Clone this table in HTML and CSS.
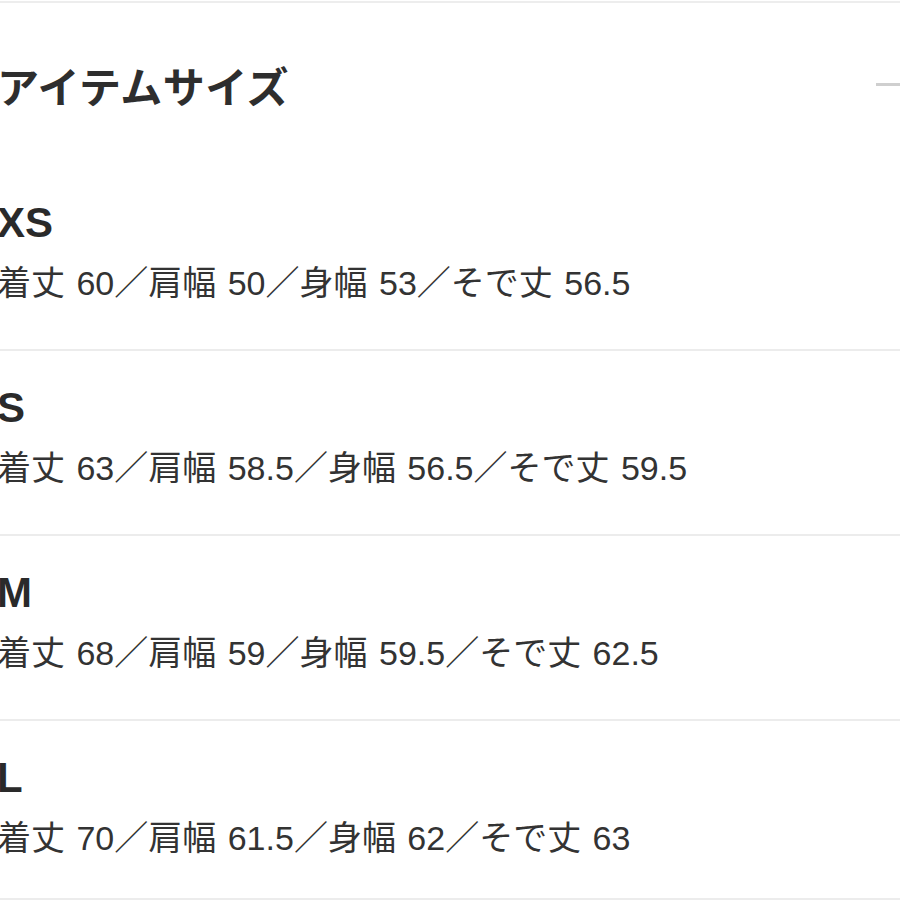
FILE: index.html
```html
<!DOCTYPE html>
<html lang="ja">
<head>
<meta charset="utf-8">
<link rel="stylesheet" href="styles.css">
</head>
<body>
<section class="panel">
  <header class="panel-head">
    <h2 class="panel-title">アイテムサイズ</h2>
    <span class="toggle" aria-label="閉じる"></span>
  </header>
  <ul class="size-list">
    <li class="size-row">
      <div class="size-name">XS</div>
      <div class="size-detail">着丈 60／肩幅 50／身幅 53／そで丈 56.5</div>
    </li>
    <li class="size-row">
      <div class="size-name">S</div>
      <div class="size-detail">着丈 63／肩幅 58.5／身幅 56.5／そで丈 59.5</div>
    </li>
    <li class="size-row">
      <div class="size-name">M</div>
      <div class="size-detail">着丈 68／肩幅 59／身幅 59.5／そで丈 62.5</div>
    </li>
    <li class="size-row">
      <div class="size-name">L</div>
      <div class="size-detail">着丈 70／肩幅 61.5／身幅 62／そで丈 63</div>
    </li>
  </ul>
</section>
</body>
</html>
```

FILE: styles.css
```css
html, body {
  margin: 0;
  padding: 0;
  background: #ffffff;
}

body {
  font-family: "Liberation Sans", "Noto Sans CJK JP", sans-serif;
  color: #333333;
  overflow: hidden;
}

.panel {
  margin-top: 1px;
  border-top: 2px solid #ededed;
  margin-left: -3px;
}

.panel-head {
  display: flex;
  align-items: center;
  justify-content: space-between;
  height: 163px;
  box-sizing: border-box;
}

.panel-title {
  margin: 0;
  font-family: "Noto Sans CJK JP", sans-serif;
  font-size: 42px;
  font-weight: 700;
  line-height: 50px;
  color: #2e2e2e;
  letter-spacing: 0.5px;
}

.toggle {
  display: block;
  width: 30px;
  height: 3px;
  background: #cfcfcf;
  margin-right: -6px;
}

.size-list {
  list-style: none;
  margin: 0;
  padding: 0;
}

.size-row {
  display: flex;
  flex-direction: column;
  gap: 15px;
  padding: 32px 0 46px;
  border-bottom: 2px solid #ececec;
}

.size-row:last-child {
  padding-bottom: 40px;
}

.size-name {
  font-size: 42px;
  font-weight: 700;
  line-height: 50px;
  color: #2a2a2a;
}

.size-detail {
  font-size: 34px;
  line-height: 40px;
  color: #333333;
  white-space: nowrap;
  word-spacing: 2px;
}
```
